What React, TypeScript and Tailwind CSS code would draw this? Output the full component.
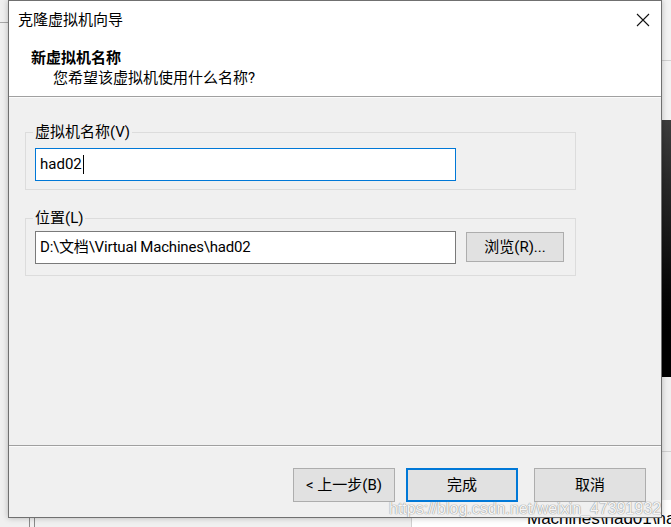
export default function App() {
  return (
    <div className="relative w-[671px] h-[527px] overflow-hidden bg-[#f0f0f0] font-['Segoe_UI','Roboto','Noto_Sans_CJK_SC',sans-serif] text-[15px] text-black">
      {/* windows behind the dialog */}
      <div className="absolute left-0 top-[22px] w-[8px] h-px bg-[#a8a8a8]" />
      <div className="absolute left-[662px] top-0 w-[9px] h-[120px] bg-[#f3f3f3]" />
      <div className="absolute left-[662px] top-[60px] w-[9px] h-px bg-[#d0d0d0]" />
      <div className="absolute left-[662px] top-[120px] w-[9px] h-[257px] bg-gradient-to-b from-[#3d3d3d] via-[#141414] to-[#000000]" />
      <div className="absolute left-[662px] top-[451px] w-[9px] h-px bg-[#d0d0d0]" />
      <div className="absolute left-[411px] top-[500px] w-[260px] h-[27px] bg-white border-l border-[#d0d0d0]" />
      <div className="absolute left-[29px] top-[510px] w-[6px] h-[17px] border-x border-[#8a8a8a]" />
      <div className="absolute left-[527px] top-[510px] text-[17px] leading-none whitespace-nowrap font-['Liberation_Sans',sans-serif]">
        Machines\had01\had01
      </div>

      {/* dialog */}
      <div className="relative ml-[8px] w-[654px] h-[518px] border border-[#707070] bg-[#f0f0f0] flex flex-col shadow-[0_0_6px_rgba(0,0,0,0.25)]">
        {/* header (title bar + page title) */}
        <div className="bg-white h-[95px] flex flex-col">
          <div className="h-[39px] flex items-center justify-between pl-[9px] pr-[11px]">
            <span className="leading-none">克隆虚拟机向导</span>
            <svg width="14" height="14" viewBox="0 0 14 14" className="mt-[-1px]">
              <path d="M1 1 L13 13 M13 1 L1 13" stroke="#111" strokeWidth="1.1" fill="none" />
            </svg>
          </div>
          <div className="pl-[22px] pt-[8px] font-bold leading-[20px]">新虚拟机名称</div>
          <div className="pl-[44px] leading-[20px]">您希望该虚拟机使用什么名称?</div>
        </div>
        <div className="h-px bg-[#a0a0a0]" />
        <div className="h-px bg-[#fbfbfb]" />

        {/* body */}
        <div className="flex-1 flex flex-col pl-[16px] pt-[34px]">
          <div className="relative w-[551px] h-[58px] border border-[#dcdcdc]">
            <span className="absolute left-[7px] top-[-11px] px-[2px] bg-[#f0f0f0] leading-[20px]">虚拟机名称(V)</span>
            <div className="absolute left-[9px] top-[15px] w-[421px] h-[33px] bg-white border border-[#0078d7] flex items-center pl-[4px]">
              <span className="leading-none">had02</span>
              <span className="w-px h-[19px] bg-black ml-px" />
            </div>
          </div>
          <div className="relative mt-[28px] w-[551px] h-[58px] border border-[#dcdcdc]">
            <span className="absolute left-[7px] top-[-11px] px-[2px] bg-[#f0f0f0] leading-[20px]">位置(L)</span>
            <div className="absolute left-[9px] top-[12px] w-[421px] h-[33px] bg-white border border-[#7a7a7a] flex items-center pl-[4px]">
              <span className="leading-none tracking-[-0.2px]">D:\文档\Virtual Machines\had02</span>
            </div>
            <div className="absolute left-[440px] top-[13px] w-[98px] h-[30px] bg-[#e1e1e1] border border-[#adadad] flex items-center justify-center">
              <span className="leading-none">浏览(R)...</span>
            </div>
          </div>
        </div>

        {/* footer */}
        <div className="h-px bg-[#a0a0a0]" />
        <div className="h-px bg-[#fbfbfb]" />
        <div className="h-[70px] flex items-start pt-[21px] pl-[284px] gap-[11px]">
          <div className="w-[102px] h-[34px] bg-[#e1e1e1] border border-[#adadad] flex items-center justify-center">
            <span className="leading-none">&lt; 上一步(B)</span>
          </div>
          <div className="w-[112px] h-[34px] bg-[#e1e1e1] border-2 border-[#0078d7] flex items-center justify-center">
            <span className="leading-none">完成</span>
          </div>
          <div className="ml-[5px] w-[112px] h-[34px] bg-[#e1e1e1] border border-[#adadad] flex items-center justify-center">
            <span className="leading-none">取消</span>
          </div>
        </div>
      </div>

      {/* watermark */}
      <div className="absolute left-[389px] top-[501px] text-[16px] leading-none whitespace-nowrap font-['Liberation_Sans',sans-serif] text-[#f6f6f6] [text-shadow:0_0_1px_#8c8c8c,0_0_1px_#8c8c8c]">
        https://blog.csdn.net/weixin_47391932
      </div>
    </div>
  );
}
